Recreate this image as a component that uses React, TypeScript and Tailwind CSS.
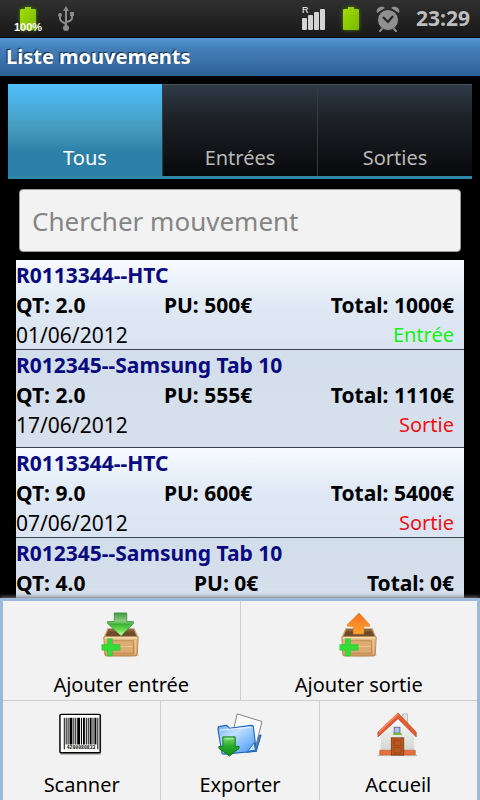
import { useState } from "react";

type Movement = {
  id: number;
  name: string;
  quantity: string;
  price: string;
  total: string;
  date?: string;
  type?: "Entrée" | "Sortie";
};

const MOVEMENTS: Movement[] = [
  { id: 1, name: "R0113344--HTC", quantity: "2.0", price: "500€", total: "1000€", date: "01/06/2012", type: "Entrée" },
  { id: 2, name: "R012345--Samsung Tab 10", quantity: "2.0", price: "555€", total: "1110€", date: "17/06/2012", type: "Sortie" },
  { id: 3, name: "R0113344--HTC", quantity: "9.0", price: "600€", total: "5400€", date: "07/06/2012", type: "Sortie" },
  { id: 4, name: "R012345--Samsung Tab 10", quantity: "4.0", price: "0€", total: "0€" },
];

const TABS = ["Tous", "Entrées", "Sorties"];

function BatteryIcon() {
  return (
    <svg width="18" height="26" viewBox="0 0 18 26" className="drop-shadow-[0_0_2px_#4d7d00]" aria-hidden="true">
      <defs>
        <linearGradient id="battery" x1="0" y1="0" x2="1" y2="1">
          <stop offset="0" stopColor="#a5de00" />
          <stop offset="1" stopColor="#76b800" />
        </linearGradient>
      </defs>
      <path d="M6 1h6v2h4q1 0 1 1v19q0 1-1 1H2q-1 0-1-1V4q0-1 1-1h4z" fill="url(#battery)" />
    </svg>
  );
}

function UsbIcon() {
  return (
    <svg width="16" height="26" viewBox="0 0 16 26" fill="none" stroke="#8b8b8b" strokeWidth="2" aria-hidden="true">
      <path d="M8 4v18M2 9v4q0 2 6 5M14 9v3q0 3-6 4" />
      <path d="M8 0l3 5H5z" fill="#8b8b8b" stroke="none" />
      <circle cx="8" cy="22" r="3" fill="#8b8b8b" stroke="none" />
      <circle cx="2" cy="9" r="2" fill="#8b8b8b" stroke="none" />
      <path d="M12 6h4v4h-4z" fill="#8b8b8b" stroke="none" />
    </svg>
  );
}

function SignalIcon() {
  return (
    <svg width="24" height="22" viewBox="0 0 24 22" fill="#d4d4d4" aria-hidden="true">
      <rect x="0" y="10" width="5" height="12" rx="1" />
      <rect x="6" y="7" width="5" height="15" rx="1" />
      <rect x="12" y="4" width="5" height="18" rx="1" />
      <rect x="18" y="1" width="5" height="21" rx="1" />
    </svg>
  );
}

function AlarmIcon() {
  return (
    <svg width="24" height="26" viewBox="0 0 24 26" aria-hidden="true">
      <g fill="#8f8f8f">
        <path d="M1 7q-1-3 1-5 4-3 7 0z" />
        <path d="M23 7q1-3-1-5-4-3-7 0z" />
      </g>
      <circle cx="12" cy="14" r="10.5" fill="#8f8f8f" stroke="#222" />
      <path d="M6 23l-2 2M18 23l2 2" stroke="#8f8f8f" strokeWidth="2" strokeLinecap="round" />
      <path d="M7 11l5 5 5-6" fill="none" stroke="#222" strokeWidth="2" />
    </svg>
  );
}

function CrateIcon({ direction }: { direction: "in" | "out" }) {
  const id = `crate-${direction}`;
  return (
    <svg width="48" height="48" viewBox="0 0 48 48" aria-hidden="true">
      <defs>
        <linearGradient id={id} x1="0" y1="0" x2="0" y2="1">
          <stop offset="0" stopColor="#e8bd86" />
          <stop offset="1" stopColor="#cf9a60" />
        </linearGradient>
        <linearGradient id={`${id}-arrow`} x1="0" y1="0" x2="0" y2="1">
          {direction === "in" ? (
            <>
              <stop offset="0" stopColor="#3b9c3f" />
              <stop offset=".35" stopColor="#8ccb84" />
              <stop offset=".5" stopColor="#3fb338" />
              <stop offset=".75" stopColor="#6be04c" />
              <stop offset="1" stopColor="#d5ffc0" />
            </>
          ) : (
            <>
              <stop offset="0" stopColor="#f5701e" />
              <stop offset="1" stopColor="#ffa42e" />
            </>
          )}
        </linearGradient>
      </defs>
      <ellipse cx="25" cy="46" rx="18" ry="1.5" fill="#c9c9c9" />
      <path d="M10 18h28l4 9H6z" fill="#c8995f" />
      <path d="M11 19h26l3 7H8z" fill="#6f4a2b" />
      <path d="M11 19h26l1 2H10z" fill="#8d6541" />
      {direction === "out" && (
        <path d="M24 2l11 12v2h-6v8H18v-8h-6v-2z" fill={`url(#${id}-arrow)`} stroke="#e08a3a" strokeWidth=".8" />
      )}
      <path d="M6 27h36l-1 18q0 2-2 2H9q-2 0-2-2z" fill={`url(#${id})`} stroke="#b07c45" strokeWidth=".8" />
      <path d="M7 28h34" stroke="#f6dcb4" strokeWidth="1.5" />
      <path d="M11 31h26v13H11z" fill="#dcab72" stroke="#b9854d" strokeWidth=".8" />
      <path d="M12 37h24M39 30v15" stroke="#efc994" strokeWidth="1" />
      {direction === "in" && (
        <path d="M17 2h13v9h7v2L24 26 10 13v-2h7z" fill={`url(#${id}-arrow)`} stroke="#3b9140" strokeWidth=".8" />
      )}
      <path d="M10 29h5v6h8v6h-8v6h-5v-6H4v-6h6z" fill="#33dd33" stroke="#2bc43a" strokeWidth=".6" />
    </svg>
  );
}

function BarcodeIcon() {
  return (
    <svg width="48" height="48" viewBox="3 0 48 48" aria-hidden="true">
      <rect x="4" y="5" width="43" height="41" rx="2" fill="#bcbcbc" />
      <rect x="4" y="3.5" width="42" height="40" rx="1" fill="#fff" stroke="#000" strokeWidth="1.5" />
      <g fill="#000">
        <path d="M8 7h1v33H8zM10 7h1v28h-1zM12 7h1v28h-1zM14 7h3v28h-3zM18 7h1v28h-1zM20 7h1v28h-1zM22 7h3v28h-3zM26 7h1v28h-1zM28 7h2v28h-2zM31 7h1v28h-1zM33 7h1v28h-1zM35 7h2v28h-2zM38 7h1v28h-1zM40 7h2v28h-2zM43 7h1v33h-1z" />
        <text x="26" y="40" fontSize="5" fontWeight="700" textAnchor="middle" fontFamily="Liberation Mono, monospace">4200080833</text>
      </g>
    </svg>
  );
}

function ExportIcon() {
  return (
    <svg width="48" height="48" viewBox="0 0 48 48" aria-hidden="true">
      <defs>
        <linearGradient id="folder" x1="0" y1="0" x2="1" y2="1">
          <stop offset="0" stopColor="#6faef5" />
          <stop offset=".35" stopColor="#c3e1ff" />
          <stop offset=".6" stopColor="#8cc2fb" />
          <stop offset="1" stopColor="#3f8df0" />
        </linearGradient>
        <linearGradient id="exportArrow" x1="0" y1="0" x2="0" y2="1">
          <stop offset="0" stopColor="#7fdf70" />
          <stop offset=".5" stopColor="#27a82b" />
          <stop offset="1" stopColor="#128b1b" />
        </linearGradient>
      </defs>
      <path d="M38 27l8-2-5 17-10 1z" fill="#3b86dc" stroke="#1855a5" />
      <path d="M21 3l26 8-7 27-25-8z" fill="#fafafa" stroke="#7d7d7d" />
      <path d="M1 19q0-3 2-3l7-1 3 3 23-3q2 0 2 2l3 25-34 3q-2 0-2-2z" fill="url(#folder)" stroke="#2164b8" strokeWidth="1.2" />
      <path d="M3 20l33-3" stroke="#e8f5ff" />
      <path d="M32 42l7-9 1 8z" fill="#c6e4ff" stroke="#2469bf" />
      <path d="M6 27h13v10h4v2L13 47 2 39v-2h4z" fill="url(#exportArrow)" stroke="#0b741a" />
      <path d="M8 29h9" stroke="#b9f5ad" />
    </svg>
  );
}

function HouseIcon() {
  return (
    <svg width="48" height="48" viewBox="0 0 48 48" aria-hidden="true">
      <defs>
        <linearGradient id="wall" x1="0" y1="0" x2="0" y2="1">
          <stop offset="0" stopColor="#ffffff" />
          <stop offset="1" stopColor="#d3d6d2" />
        </linearGradient>
      </defs>
      <rect x="29" y="3" width="5" height="12" fill="#dfe2e2" stroke="#a9adad" strokeWidth=".7" />
      <path d="M6 23L24 6l17 17v18H6z" fill="url(#wall)" />
      <path d="M5 41h37v5H5z" fill="#e8703c" stroke="#c65a2c" strokeWidth=".7" />
      <path d="M3 46.500h41" stroke="#b8aaa5" />
      <path d="M24 2L3 22v5L24 8l19 19v-5z" fill="#e65a36" stroke="#c04424" strokeWidth=".7" />
      <path d="M24 3L4 22" stroke="#ff9b73" strokeWidth="1.2" />
      <rect x="20" y="17" width="6" height="6" fill="#a8c1ee" stroke="#666c91" />
      <path d="M19 23h9v2h-9z" fill="#71bd39" />
      <rect x="17" y="28" width="13" height="18" fill="#b95821" stroke="#7d3512" strokeWidth=".8" />
      <path d="M20 31h7v5h-7zM20 38h7v6h-7z" fill="none" stroke="#944617" strokeWidth=".8" />
    </svg>
  );
}

function MovementItem({ movement, odd }: { movement: Movement; odd: boolean }) {
  return (
    <li
      className={
        odd
          ? "h-[90px] shrink-0 border-b border-[#39434a] bg-linear-to-b from-[#f8fbff] via-[#dfe9f5] via-50% to-[#dae4f2]"
          : "h-[98px] shrink-0 border-b border-[#39434a] bg-linear-to-b from-[#d3deeb] to-[#d8e0ed]"
      }
    >
      <h2 className="font-bold leading-[30px] text-[#0a0a80]">{movement.name}</h2>
      <div className="flex justify-between pr-[10px] font-bold leading-[30px]">
        <span>QT: {movement.quantity}</span>
        <span>PU: {movement.price}</span>
        <span>Total: {movement.total}</span>
      </div>
      {movement.date && (
        <div className="flex justify-between pr-[10px] leading-[30px]">
          <span>{movement.date}</span>
          <span className={movement.type === "Entrée" ? "text-[20px] text-[#13f313]" : "text-[20px] text-[#f01010]"}>
            {movement.type}
          </span>
        </div>
      )}
    </li>
  );
}

function MenuButton({ label, icon }: { label: string; icon: React.ReactNode }) {
  return (
    <button type="button" className="flex h-[99px] min-w-0 flex-1 flex-col items-center bg-[#f2f2f2] pt-[10px]">
      {icon}
      <span className="mt-[13px] text-[20px] leading-[30px]">{label}</span>
    </button>
  );
}

export default function App() {
  const [activeTab, setActiveTab] = useState("Tous");
  const [query, setQuery] = useState("");

  return (
    <div className="flex h-screen flex-col overflow-hidden bg-black font-['Noto_Sans','Open_Sans',sans-serif] text-[21px] text-black">
      {/* STATUS BAR */}
      <div className="flex h-[38px] shrink-0 items-center justify-between border-b border-black bg-linear-to-b from-[#303030] to-[#181818] pl-[14px] pr-[10px]">
        <div className="flex items-center gap-4">
          <div className="relative flex w-7 justify-center">
            <BatteryIcon />
            <span className="absolute -bottom-px left-0 font-['Liberation_Sans',sans-serif] text-[11px] font-bold leading-3 text-white">100%</span>
          </div>
          <UsbIcon />
        </div>
        <div className="flex items-center gap-4">
          <div className="relative">
            <SignalIcon />
            <span className="absolute -top-0.5 left-0 font-['Liberation_Sans',sans-serif] text-[9px] leading-2 text-white">R</span>
          </div>
          <BatteryIcon />
          <AlarmIcon />
          <time className="font-['Open_Sans',sans-serif] font-bold text-[#bebebe]">23:29</time>
        </div>
      </div>

      <header className="flex h-[38px] shrink-0 items-center bg-linear-to-b from-[#5696d6] via-[#4480bb] via-25% to-[#2f6194] px-[6px]">
        <h1 className="text-[20px] font-bold text-white [text-shadow:-1px_-1px_1px_#142a40]">Liste mouvements</h1>
      </header>

      {/* TABS */}
      <div role="tablist" className="mx-2 mt-2 flex h-[95px] shrink-0 border-b-3 border-[#2c86a8] text-[20px]">
        {TABS.map((tab) => (
          <button
            key={tab}
            type="button"
            role="tab"
            aria-selected={activeTab === tab}
            onClick={() => setActiveTab(tab)}
            className={
              activeTab === tab
                ? "flex flex-1 items-end justify-center bg-linear-to-b from-[#50c0ff] via-[#4599b8] via-50% to-[#2b80aa] to-75% pb-[3px] leading-[30px] text-white"
                : "flex flex-1 items-end justify-center border-l border-t border-l-[#333b42] border-t-[#4a525a] bg-linear-to-b from-[#2f3a47] via-[#1c2025] via-40% to-[#08090c] pb-[3px] leading-[30px] text-[#b9b9b9]"
            }
          >
            {tab}
          </button>
        ))}
      </div>

      <main className="flex min-h-0 flex-1 flex-col overflow-hidden">
        <input
          type="text"
          aria-label="Chercher mouvement"
          placeholder="Chercher mouvement"
          value={query}
          onChange={(e) => setQuery(e.target.value)}
          className="mx-[19px] mt-[10px] h-[63px] shrink-0 rounded border border-[#999] bg-[#f2f2f2] px-3 text-[26px] outline-none placeholder:text-[#848484]"
        />
        <ul className="mx-4 mt-2 flex flex-col">
          {MOVEMENTS.map((movement, idx) => (
            <MovementItem key={movement.id} movement={movement} odd={idx % 2 === 0} />
          ))}
        </ul>
      </main>

      {/* OPTIONS MENU */}
      <nav className="relative flex shrink-0 flex-col gap-px border-x-3 border-t-3 border-[#9db9d9] bg-[#cfcfcf] shadow-[0_-1px_4px_#777]">
        <div className="flex gap-px">
          <MenuButton label="Ajouter entrée" icon={<CrateIcon direction="in" />} />
          <MenuButton label="Ajouter sortie" icon={<CrateIcon direction="out" />} />
        </div>
        <div className="flex gap-px">
          <MenuButton label="Scanner" icon={<BarcodeIcon />} />
          <MenuButton label="Exporter" icon={<ExportIcon />} />
          <MenuButton label="Accueil" icon={<HouseIcon />} />
        </div>
      </nav>
    </div>
  );
}
